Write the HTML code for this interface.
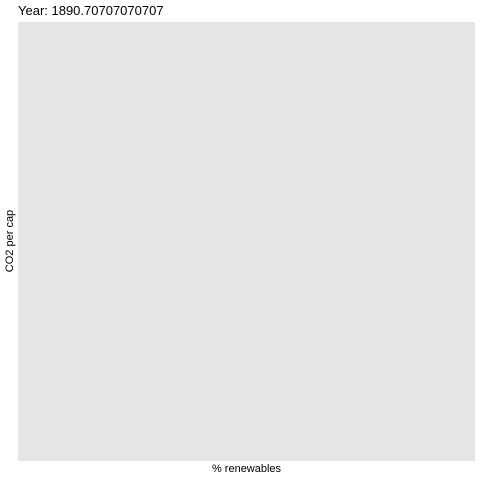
<!DOCTYPE html>
<html><head><style>
html,body{margin:0;padding:0;background:#fff;width:480px;height:480px;overflow:hidden;font-family:"Liberation Sans",Arial,sans-serif;}
.p{position:absolute;left:18px;top:22px;width:457px;height:439px;background:#e5e5e5;}
.t{position:absolute;left:18px;top:3px;font-size:13px;color:#000;}
.x{position:absolute;left:18px;width:457px;top:463px;text-align:center;font-size:11px;}
.y{position:absolute;left:4px;top:241px;font-size:11px;transform:translate(-50%,-50%) rotate(-90deg);transform-origin:center;white-space:nowrap;margin-left:6px;}
</style></head><body>
<div class="t">Year: 1890.70707070707</div>
<div class="p"></div>
<div class="x">% renewables</div>
<div class="y">CO2 per cap</div>
</body></html>
